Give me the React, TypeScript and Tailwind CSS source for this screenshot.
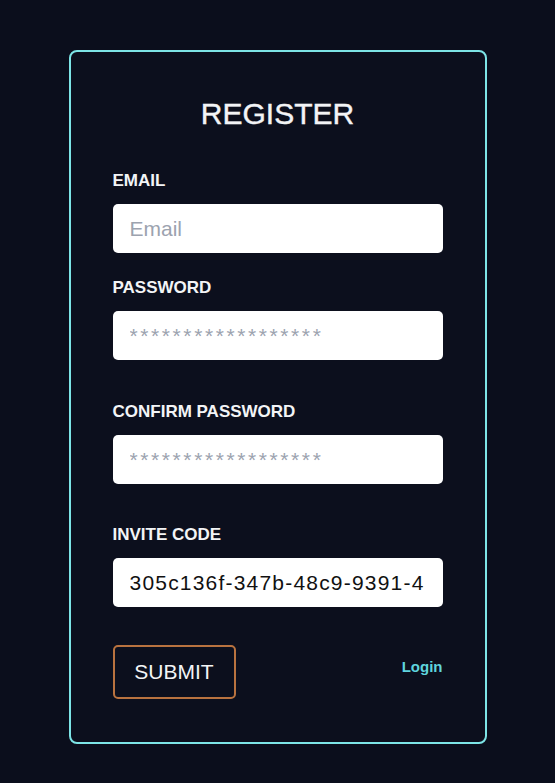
import React from 'react';

const font = { fontFamily: '"Liberation Sans", Arial, sans-serif' };

const Field: React.FC<{
  label: string;
  type?: string;
  placeholder?: string;
  value?: string;
  className?: string;
  inputClass?: string;
}> = ({ label, type = 'text', placeholder, value, className = '', inputClass = '' }) => (
  <div className={className}>
    <label className="block text-[17px] leading-[20px] font-bold text-[#f3f4f6]">{label}</label>
    <input
      type={type}
      placeholder={placeholder}
      defaultValue={value}
      readOnly={value !== undefined}
      className={`mt-[13px] block h-[49px] w-full rounded-[5px] bg-white px-[17px] text-[21px] text-[#111] outline-none placeholder:text-[#9ca3af] ${inputClass}`}
      style={font}
    />
  </div>
);

const App: React.FC = () => {
  return (
    <div className="min-h-screen w-full bg-[#0b0e1c] pt-[50px]" style={font}>
      <div className="mx-auto w-[418px] rounded-[8px] border-2 border-[#7de4e6] bg-[#0c0f1d] px-[42px] pt-[44px] pb-[43px]">
        <h1 className="text-center text-[30px] leading-[36px] text-[#f3f4f6] [-webkit-text-stroke:0.4px_#f3f4f6]">
          REGISTER
        </h1>

        <form className="mt-[39px]" onSubmit={e => e.preventDefault()}>
          <Field label="EMAIL" placeholder="Email" />
          <Field
            label="PASSWORD"
            placeholder="******************"
            inputClass="tracking-[2.6px]"
            className="mt-[25px]"
          />
          <Field
            label="CONFIRM PASSWORD"
            placeholder="******************"
            inputClass="tracking-[2.6px]"
            className="mt-[42px]"
          />
          <Field
            label="INVITE CODE"
            value="305c136f-347b-48c9-9391-4"
            inputClass="tracking-[1.2px]"
            className="mt-[41px]"
          />

          <div className="mt-[38px] flex items-start justify-between">
            <button
              type="submit"
              className="h-[54px] w-[123px] rounded-[5px] border-2 border-[#b9723f] text-[21px] text-[#f3f4f6]"
            >
              SUBMIT
            </button>
            <a href="#" className="pt-[12px] text-[15px] leading-[20px] font-bold text-[#5fd4de]">
              Login
            </a>
          </div>
        </form>
      </div>
    </div>
  );
};

export default App;
